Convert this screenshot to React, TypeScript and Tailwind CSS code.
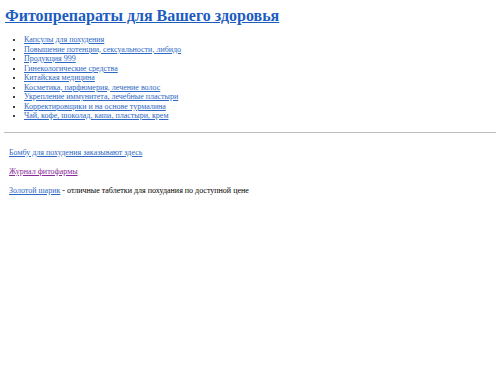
export default function App() {
  const items = [
    "Капсулы для похудения",
    "Повышение потенции, сексуальности, либидо",
    "Продукция 999",
    "Гинекологические средства",
    "Китайская медицина",
    "Косметика, парфюмерия, лечение волос",
    "Укрепление иммунитета, лечебные пластыри",
    "Корректировщики и на основе турмалина",
    "Чай, кофе, шоколад, каша, пластыри, крем",
  ];
  return (
    <div className="w-[500px] h-[375px] bg-white px-[4px] pt-[6px] text-black" style={{ fontFamily: '"Liberation Serif", "Times New Roman", serif' }}>
      <h1 className="text-[16px] leading-[20px] font-bold pl-[1px]">
        <a href="#" className="text-[#1c5cbf] underline">Фитопрепараты для Вашего здоровья</a>
      </h1>
      <ul className="list-disc pl-[20px] mt-[9px] text-[8px] leading-[9.5px] marker:text-black">
        {items.map((t) => (
          <li key={t}>
            <a href="#" className="text-[#2d68c4] underline">{t}</a>
          </li>
        ))}
      </ul>
      <hr className="mt-[11px] border-t border-[#bdbdbd]" />
      <div className="pl-[5px] text-[8px] leading-[10px]">
        <p className="mt-[15px]"><a href="#" className="text-[#2d68c4] underline">Бомбу для похудения заказывают здесь</a></p>
        <p className="mt-[9.5px]"><a href="#" className="text-[#8a2a9a] underline">Журнал фитофармы</a></p>
        <p className="mt-[9px]"><a href="#" className="text-[#2d68c4] underline">Золотой шарик</a> - отличные таблетки для похудания по доступной цене</p>
      </div>
    </div>
  );
}
